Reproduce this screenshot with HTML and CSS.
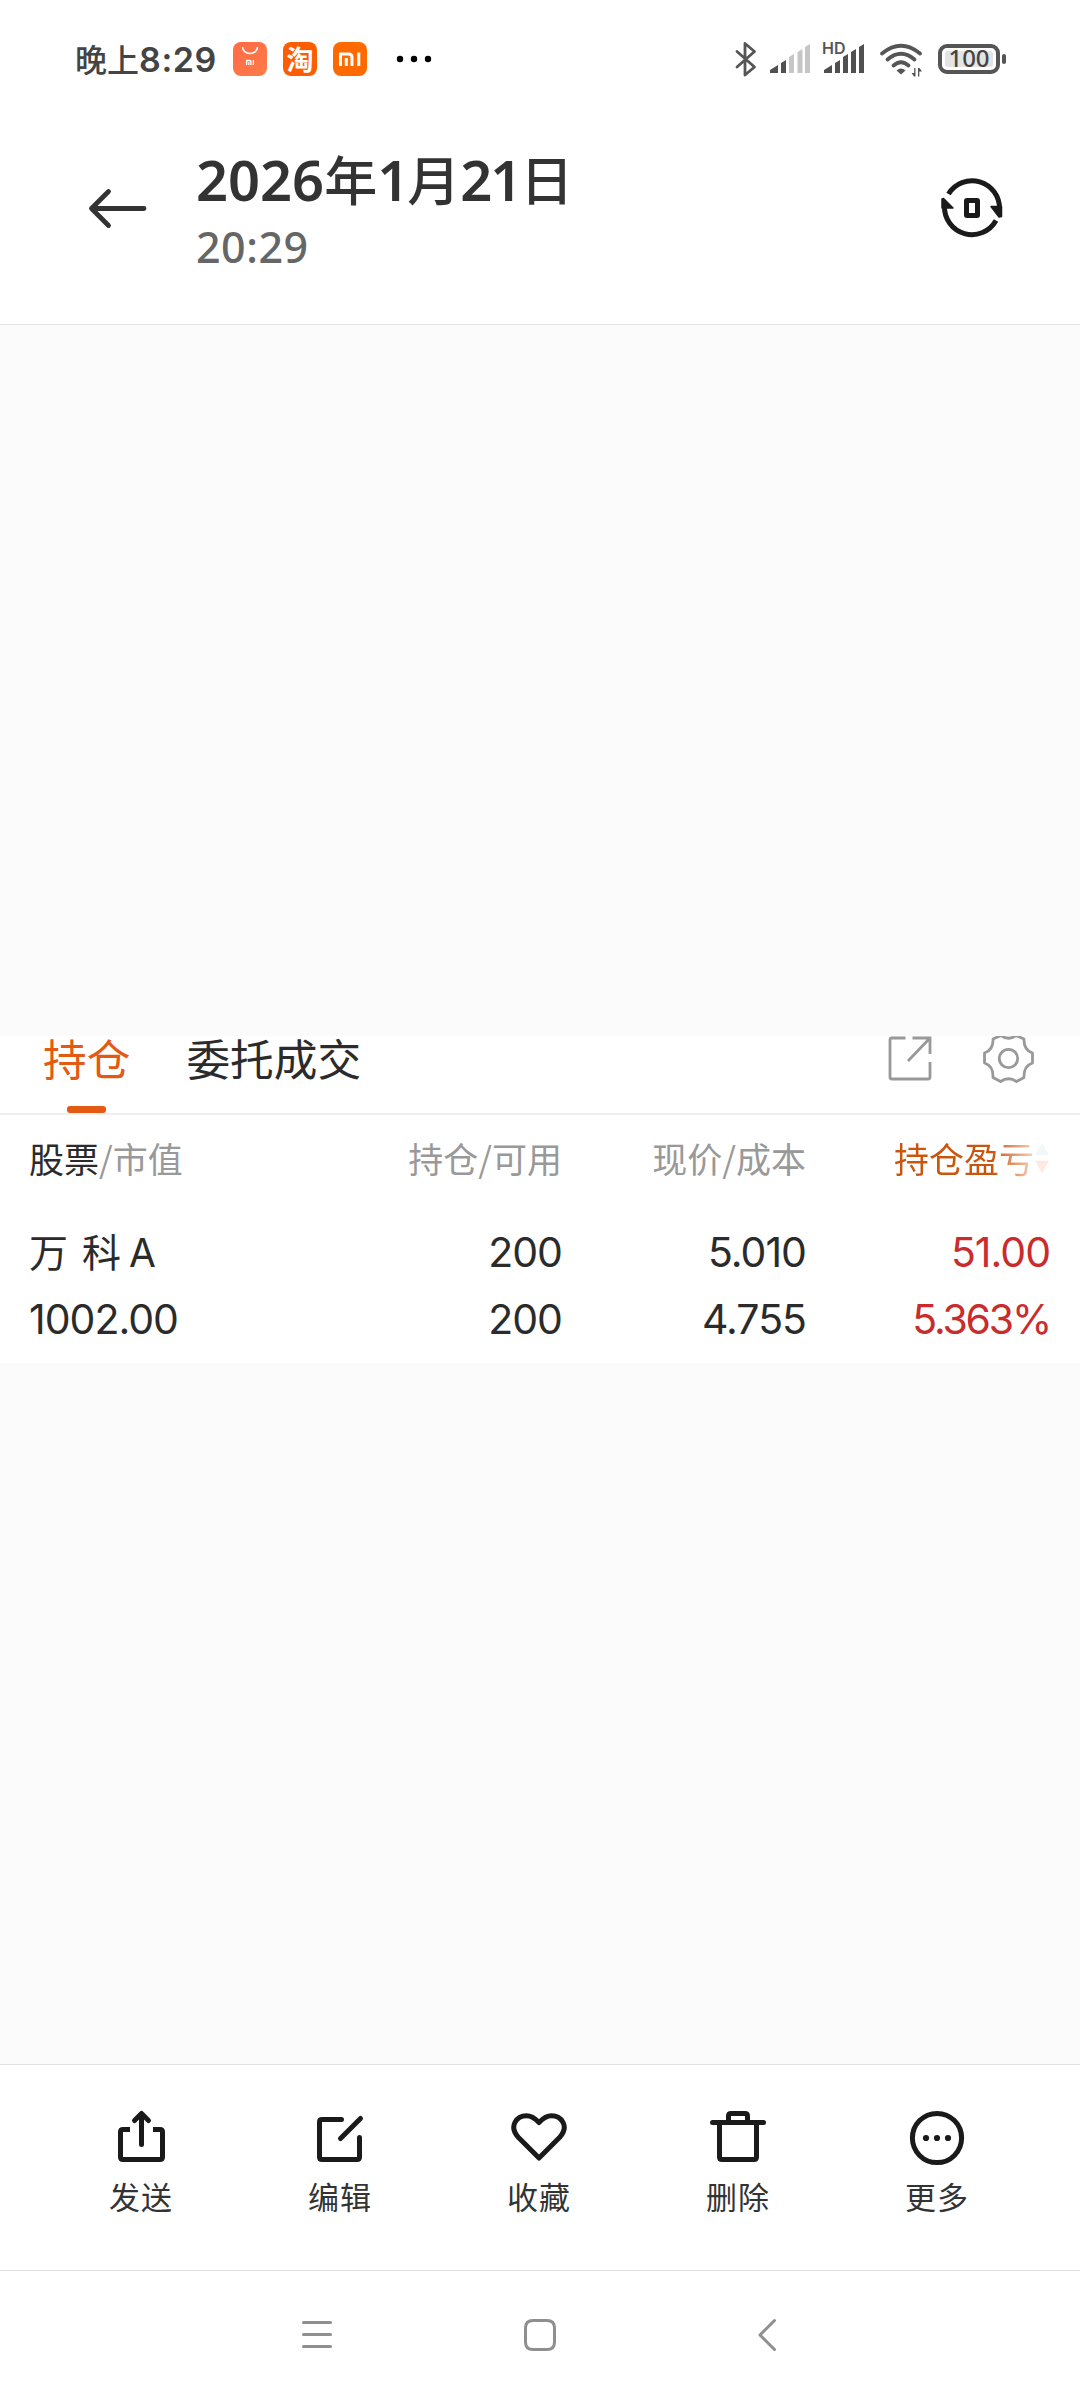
FILE: index.html
```html
<!DOCTYPE html>
<html lang="zh-CN">
<head>
<meta charset="utf-8">
<title>2026年1月21日</title>
<link rel="stylesheet" href="styles.css">
</head>
<body>
<header class="statusbar">
  <span class="clock">晚上<span class="clock-num">8:29</span></span>
  <div class="apps">
    <svg width="34" height="34" viewBox="0 0 34 34"><defs><linearGradient id="bag" x1="0" y1="0" x2="1" y2="1"><stop offset="0" stop-color="#ff6a45"/><stop offset="1" stop-color="#ff7c48"/></linearGradient></defs><rect width="34" height="34" rx="8" fill="url(#bag)"/><path d="M9.500 5a7.500 6.500 0 0 0 15 0" fill="none" stroke="#fff" stroke-width="1.500"/><path d="M13.700 23v-4.500h3q1.200 0 1.200 1.200v3.300M15.800 20.300v2.700M20.400 18v5" fill="none" stroke="#fff" stroke-width="1.300"/></svg>
    <span class="tao">淘</span>
    <svg width="34" height="34" viewBox="0 0 34 34"><rect width="34" height="34" rx="8" fill="#ff6a00"/><path d="M7.500 24V12h8q3.500 0 3.500 3.500V24M13.300 16v8M25.800 10.500V24" fill="none" stroke="#fff" stroke-width="3"/></svg>
    <svg class="dots" width="36" height="34" viewBox="0 0 36 34"><circle cx="4" cy="17" r="3.200"/><circle cx="18" cy="17" r="3.200"/><circle cx="32" cy="17" r="3.200"/></svg>
  </div>
  <svg class="sys" width="276" height="52" viewBox="732 33 276 52">
    <path d="M737 51.500 754.500 67l-9.500 8V43.500l9.500 8L737 67" fill="none" stroke="#555" stroke-width="2.800" stroke-linejoin="round" stroke-linecap="round"/>
    <g fill="#505050"><path d="M770 73v-3l8-5v8zM781 73V63l5-3v13z"/><path d="M789 73V57l5-3v19zM797.500 73V52l5-3v24zM805 73V47l5-3v29z" fill="#c6c6c6"/>
    <path d="M824 73v-3l8-5v8zM835 73V63l5-3v13zM843 73V57l5-3v19zM851 73V52l5-3v24zM859 73V47l5-3v29z"/></g>
    <text class="hd" x="822" y="54">HD</text>
    <g fill="none" stroke="#555" stroke-width="3.800" stroke-linecap="round"><path d="M882 53.500q19-15.500 38 0M887.500 59.500q13.500-11.500 27 0M893.500 65.500q7.500-6.500 15 0"/></g>
    <path d="M896.500 70.500q4.500-4 9 0l-4.500 4z" fill="#555"/>
    <path d="M915.500 68v8.500h-1.500L911.500 73h2.700v-5zM918 76.500V68h1.500l2.500 3.500h-2.700v5z" fill="#555"/>
    <rect x="940" y="46" width="58" height="26" rx="7" fill="#fff" stroke="#555" stroke-width="4"/><rect x="945" y="51" width="48" height="16" rx="3" fill="#e4e4e4"/><rect x="1002" y="54" width="4" height="10" rx="2" fill="#555"/>
    <text class="level" x="969" y="67" text-anchor="middle">100</text>
  </svg>
</header>
<section class="topbar">
  <svg width="60" height="44" viewBox="88 186 60 44" fill="none" stroke="#333" stroke-width="4.800" stroke-linecap="round" stroke-linejoin="round"><path d="M144 208.500H91.500M108.500 191.500 91.500 208.500 108.500 225.500"/></svg>
  <div class="stamp">
    <h1><span class="num">2026</span>年<span class="num month">1</span>月<span class="num day">21</span>日</h1>
    <p>20:29</p>
  </div>
  <svg class="rotate" width="64" height="64" viewBox="940 176 64 64"><g fill="none" stroke="#1a1a1a" stroke-width="5"><path d="M948.500 194A27.500 27.500 0 0 1 999.500 209M996 220.500A27.500 27.500 0 0 1 944.500 206"/><rect x="966.500" y="200.500" width="11" height="15" rx=".5"/></g><path d="M943.500 198.500 953 208H942v-9zM991 206.500h10.500v10L999 217z" fill="#1a1a1a" stroke="#1a1a1a" stroke-width="1.500" stroke-linejoin="round"/></svg>
</section>
<main class="viewer">
  <section class="shot">
    <nav class="tabs">
      <span class="tab active">持仓</span><span class="tab">委托成交</span>
      <div class="tools"><svg width="150" height="56" viewBox="885 1036 150 56" fill="none" stroke="#999" stroke-width="2.800">
        <path d="M905.500 1038H892q-2 0-2 2V1077q0 2 2 2h36q2 0 2-2v-15M912.500 1038h17.500v16M930 1038 908 1061"/>
        <circle cx="1008.500" cy="1058.500" r="9.200"/>
        <path d="M1001 1035.500Q1008.500 1041 1016 1035.500L1024 1039Q1023.500 1050 1032.500 1053V1063Q1023.500 1066 1024 1077.500L1016.500 1081.500Q1008.500 1076 1000.500 1081.500L993 1077.500Q993.500 1066 984.500 1063V1053Q993.500 1050 993 1039Z" stroke-linejoin="round"/></svg></div>
    </nav>
    <div class="table">
      <div class="row head"><span><b>股票</b>/市值</span><span>持仓/可用</span><span>现价/成本</span><span class="sort"><span class="fade">持仓盈亏</span><svg width="16" height="34" viewBox="0 0 17 34"><path d="M8.500 1 16 14H1z" fill="#f2f7f7"/><path d="M1 20h15L8.500 33z" fill="#fde9df"/></svg></span></div>
      <div class="row"><span class="name">万<i></i>科<i class="thin"></i>A</span><span>200</span><span>5.010</span><span class="up">51.00</span></div>
      <div class="row"><span>1002.00</span><span>200</span><span>4.755</span><span class="up percent">5.363%</span></div>
    </div>
  </section>
</main>
<footer class="actions">
  <div class="action"><svg width="60" height="60" viewBox="111 2108 60 60"><path d="M130 2129.500h-7q-2.500 0-2.500 2.500v25q0 2.500 2.500 2.500h37q2.500 0 2.500-2.500v-25q0-2.500-2.500-2.500h-7"/><path d="M141.500 2144.500V2114M134.500 2120.500l7-7 7 7" stroke-linecap="round" stroke-linejoin="round"/></svg>发送</div>
  <div class="action"><svg width="60" height="60" viewBox="310 2108 60 60" stroke-linecap="round"><path d="M341.500 2119.500H322q-2.500 0-2.500 2.500v35q0 2.500 2.500 2.500h35q2.500 0 2.500-2.500v-19.500M340.500 2138.500l20-20"/></svg>编辑</div>
  <div class="action"><svg width="60" height="60" viewBox="509 2108 60 60" stroke-linejoin="round"><path d="M539 2158 518.500 2137.500C508 2126 517 2115.800 526.500 2115.800Q532.500 2115.800 539 2122.500Q545.500 2115.800 551.500 2115.800C561 2115.800 570 2126 559.500 2137.500Z"/></svg>收藏</div>
  <div class="action"><svg width="60" height="60" viewBox="708 2108 60 60"><path d="M712.500 2122.500h51" stroke-linecap="round"/><path d="M719.500 2123v34q0 2.500 2.500 2.500h32q2.500 0 2.500-2.500v-34M728.500 2122v-6q0-2.500 2.500-2.500h14q2.500 0 2.500 2.500v6"/></svg>删除</div>
  <div class="action"><svg width="60" height="60" viewBox="907 2108 60 60"><circle cx="937" cy="2138" r="24.600"/><g fill="#1a1a1a" stroke="none"><circle cx="926" cy="2138" r="3.100"/><circle cx="937" cy="2138" r="3.100"/><circle cx="948" cy="2138" r="3.100"/></g></svg>更多</div>
</footer>
<nav class="sysnav">
  <svg width="480" height="40" viewBox="300 2314 480 40" fill="none" stroke="#8f8f8f" stroke-width="3" stroke-linecap="round" stroke-linejoin="round"><path d="M303.500 2322.500h27M303.500 2334.500h27M303.500 2346.500h27M774.500 2320.500 760 2335l14.500 14.500"/><path d="M533 2320.500h14q7.500 0 7.500 7.500v14q0 7.500-7.500 7.500h-14q-7.500 0-7.500-7.500v-14q0-7.500 7.500-7.500z"/></svg>
</nav>
</body>
</html>
```
FILE: styles.css
```css
* { box-sizing: border-box; }
body { margin: 0; width: 1080px; height: 2400px; display: flex; flex-direction: column; background: #fff; color: #2b2b2b; font-family: "Noto Sans CJK SC", sans-serif; overflow: hidden; }
svg { display: block; flex: none; }
.statusbar { height: 118px; display: flex; align-items: center; padding: 0 72px 0 75px; }
.clock { font-size: 32px; font-weight: 500; line-height: 40px; color: #444; white-space: nowrap; width: 158px; }
.clock-num { font-family: Inter, sans-serif; font-weight: 600; font-size: 34px; letter-spacing: .6px; }
.apps { display: flex; gap: 16px; }
.tao { width: 34px; height: 34px; border-radius: 8px; background: #fd5c00; color: #fff; font-size: 27px; font-weight: 700; line-height: 34px; text-align: center; }
.dots { margin-left: 13px; }
.sys { margin-left: auto; }
.hd { font: 600 16px Inter, sans-serif; fill: #555; }
.level { font: 500 24px "Noto Sans", sans-serif; fill: #444; }
.topbar { height: 207px; display: flex; border-bottom: 1px solid #e4e4e4; padding: 0 76px 0 88px; }
.topbar > svg { margin-top: 68px; }
.topbar .rotate { margin: 58px 0 0 auto; }
.stamp { margin: 26px 0 0 48px; }
h1 { margin: 0; font-size: 53px; line-height: 68px; font-weight: 500; color: #333; white-space: nowrap; }
h1 .num { font-family: "Noto Sans", sans-serif; font-weight: 600; font-size: 56px; line-height: 1; }
h1 .month { margin-right: -2px; }
h1 .day { letter-spacing: -2px; }
.stamp p { margin: 13px 0 0; font: 500 43px/44px "Noto Sans", sans-serif; color: #666; letter-spacing: .5px; }
.viewer { height: 1739px; background: #fbfbfb; padding-top: 711px; }
.shot { height: 327px; background: #fff; }
.tabs { height: 79px; display: flex; border-bottom: 2px solid #efefef; padding-left: 43px; font-size: 43.7px; line-height: 42px; gap: 56px; }
.tab.active { color: #e35a12; position: relative; height: 77px; }
.tab.active::after { content: ""; position: absolute; left: 24px; bottom: 0; width: 39px; height: 7px; border-radius: 3px; background: #e35a12; }
.tools { margin: 0 45px 0 auto; }
.row { display: grid; grid-template-columns: 261px 272px 244px 244px; padding-left: 29px; font: 41px/67px Inter, "Noto Sans CJK SC", sans-serif; letter-spacing: -1px; height: 67px; }
.row > span + span { text-align: right; }
.row.head { height: 104px; font: 35px/85px "Noto Sans CJK SC", sans-serif; letter-spacing: 0; color: #999; }
.head b { font-weight: 400; color: #2b2b2b; }
.sort { display: flex; justify-content: flex-end; align-items: center; height: 85px; }
.fade { background: linear-gradient(90deg, #c9560f 0 70%, #f7d3bf); background-clip: text; -webkit-background-clip: text; color: transparent; }
.row .up { color: #c92c2c; }
.row .percent { letter-spacing: -2.2px; }
.name { font-size: 39px; }
.name i { display: inline-block; width: 15px; }
.name i.thin { width: 9px; }
.actions { height: 206px; border-top: 1px solid #e2e2e2; display: grid; grid-template-columns: repeat(5, 199px); padding: 43px 0 0 41px; }
.action { display: flex; flex-direction: column; align-items: center; gap: 8px; font-size: 31px; line-height: 40px; color: #333; letter-spacing: 1px; text-indent: 1px; }
.action svg { fill: none; stroke: #1a1a1a; stroke-width: 5; }
.sysnav { height: 130px; border-top: 1px solid #e2e2e2; padding: 43px 0 0 300px; }
```
